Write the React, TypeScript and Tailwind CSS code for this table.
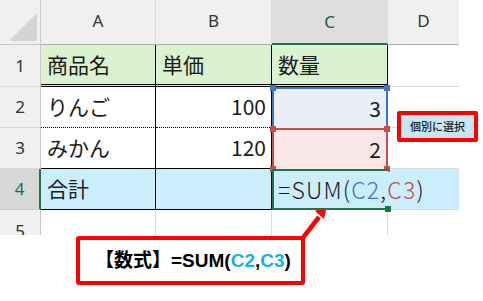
import React from "react";

const jp = "font-['Noto_Sans_CJK_JP','Noto_Sans',sans-serif]";
const ui = "font-['Noto_Sans','Noto_Sans_CJK_JP',sans-serif]";

function Handle({ pos, color }: { pos: string; color: string }) {
  return <span className={`absolute w-[6px] h-[6px] ${pos} ${color}`} />;
}

export default function App() {
  return (
    <div className={`relative w-[483px] h-[301px] overflow-hidden bg-white ${jp}`}>
      {/* sheet */}
      <div className="h-[235px] overflow-hidden">
        {/* column headers */}
        <div className={`flex h-[45px] ${ui} text-[17px] text-[#333]`}>
          <div className="relative w-[41px] bg-[#f0f0f0] border-r border-b border-[#c8c8c8]">
            <svg className="absolute left-0 top-0" width="41" height="45" viewBox="0 0 41 45">
              <polygon points="9,41 37,13 37,41" fill="#d4d4d4" />
            </svg>
          </div>
          <div className="w-[115px] flex items-center justify-center pb-[2px] bg-[#f0f0f0] border-r border-r-[#dadada] border-b border-b-[#ababab]">A</div>
          <div className="w-[116px] flex items-center justify-center pb-[2px] bg-[#f0f0f0] border-r border-r-[#dadada] border-b border-b-[#ababab]">B</div>
          <div className="w-[116px] flex items-center justify-center bg-[#dedede] border-r border-r-[#dadada] border-b-2 border-b-[#217346] text-[#1d5c3c]">C</div>
          <div className="w-[71px] flex items-center justify-center pb-[2px] bg-[#f0f0f0] border-b border-b-[#ababab]">D</div>
        </div>

        {/* row 1 */}
        <div className="flex h-[42px] text-[21px] text-[#1a1a1a]">
          <div className={`w-[41px] flex items-center justify-center bg-[#f0f0f0] border-r border-r-[#c8c8c8] border-b border-b-[#dadada] ${ui} text-[17px] text-[#333]`}>1</div>
          <div className="w-[115px] flex items-center pl-[6px] bg-[#daf2d0] border-r border-b-[3px] border-double border-black">商品名</div>
          <div className="w-[116px] flex items-center pl-[6px] bg-[#daf2d0] border-r border-b-[3px] border-double border-black">単価</div>
          <div className="w-[116px] flex items-center pl-[6px] bg-[#daf2d0] border-r border-b-[3px] border-double border-black">数量</div>
          <div className="w-[71px] border-b border-[#dadada]" />
        </div>

        {/* row 2 */}
        <div className="flex h-[41px] text-[21px] text-[#1a1a1a]">
          <div className={`w-[41px] flex items-center justify-center bg-[#f0f0f0] border-r border-r-[#c8c8c8] border-b border-b-[#dadada] ${ui} text-[17px] text-[#333]`}>2</div>
          <div className="w-[115px] flex items-center pl-[6px] border-r border-r-black border-b border-b-black [border-bottom-style:dotted]">りんご</div>
          <div className="w-[116px] flex items-center justify-end pr-[5px] border-r border-r-black border-b border-b-black [border-bottom-style:dotted]">100</div>
          <div className="relative w-[116px] flex items-center justify-end pr-[5px] bg-[#e9eef8] border-2 border-b-0 border-[#4472c4]">
            3
            <Handle pos="-left-[4px] -top-[4px]" color="bg-[#4472c4]" />
            <Handle pos="-right-[4px] -top-[4px]" color="bg-[#4472c4]" />
          </div>
          <div className="w-[71px] border-b border-[#dadada]" />
        </div>

        {/* row 3 */}
        <div className="flex h-[41px] text-[21px] text-[#1a1a1a]">
          <div className={`w-[41px] flex items-center justify-center bg-[#f0f0f0] border-r border-r-[#c8c8c8] border-b border-b-[#dadada] ${ui} text-[17px] text-[#333]`}>3</div>
          <div className="w-[115px] flex items-center pl-[6px] border-r border-b border-black">みかん</div>
          <div className="w-[116px] flex items-center justify-end pr-[5px] border-r border-b border-black">120</div>
          <div className="relative w-[116px] flex items-center justify-end pr-[5px] bg-[#f9e6e6] border-2 border-b-0 border-[#c0504d]">
            2
            <Handle pos="-left-[4px] -top-[4px]" color="bg-[#c0504d]" />
            <Handle pos="-right-[4px] -top-[4px]" color="bg-[#c0504d]" />
            <Handle pos="-left-[4px] -bottom-[3px]" color="bg-[#c0504d]" />
            <Handle pos="-right-[4px] -bottom-[3px]" color="bg-[#c0504d]" />
          </div>
          <div className="w-[71px] border-b border-[#dadada]" />
        </div>

        {/* row 4 */}
        <div className="flex h-[41px] text-[21px] text-[#1a1a1a]">
          <div className={`w-[41px] flex items-center justify-center bg-[#d8d8d8] border-r-2 border-r-[#217346] border-b border-b-[#c8c8c8] ${ui} text-[17px] text-[#1d6b43]`}>4</div>
          <div className="w-[115px] flex items-center pl-[6px] bg-[#caeefb] border-r border-b border-black">合計</div>
          <div className="w-[116px] bg-[#caeefb] border-r border-b border-black" />
          <div className="relative z-10 w-[116px] flex items-center pl-[4px] whitespace-nowrap bg-[#caeefb] border-2 border-r-0 border-[#217346] text-[23px] tracking-[1.2px]">
            <span className="font-light">=SUM(</span>
            <span className="font-light text-[#4472c4]">C2</span>
            <span className="font-light">,</span>
            <span className="font-light text-[#c0504d]">C3</span>
            <span className="font-light">)</span>
            <span className="absolute -right-[3px] -bottom-[4px] w-[6px] h-[6px] bg-[#217346]" />
          </div>
          <div className="w-[71px] bg-[#caeefb] border-b border-[#dadada]" />
        </div>

        {/* row 5 */}
        <div className="flex h-[41px]">
          <div className={`w-[41px] flex items-center justify-center bg-[#f0f0f0] border-r border-r-[#c8c8c8] ${ui} text-[17px] text-[#333]`}>5</div>
          <div className="w-[115px] border-r border-[#dadada]" />
          <div className="w-[116px] border-r border-[#dadada]" />
          <div className="w-[116px] border-r border-[#dadada]" />
          <div className="w-[71px]" />
        </div>
      </div>

      {/* formula note */}
      <div className="ml-[76px] mt-[1px] w-[229px] h-[49px] flex items-center pl-[15px] border-4 border-[#ff0000] rounded-[3px] bg-white">
        <span className="text-[19px] font-bold text-black whitespace-nowrap font-['Liberation_Sans','Noto_Sans_CJK_JP',sans-serif]">
          <span className={jp}>【数式】</span>=SUM(<span className="text-[#1aaeea]">C2</span>,<span className="text-[#1aaeea]">C3</span>)
        </span>
      </div>

      {/* arrow from note to the formula cell */}
      <svg className="absolute left-0 top-0 pointer-events-none" width="483" height="301" viewBox="0 0 483 301">
        <line x1="302" y1="239" x2="319" y2="217" stroke="#ff0000" strokeWidth="4.5" />
        <polygon points="327,206 315,211 324,219" fill="#ff0000" />
      </svg>

      {/* callout for the separate selection */}
      <div className="absolute left-[397px] top-[111px] w-[81px] h-[31px] flex items-center justify-center border-4 border-[#ff0000] rounded-[2px] bg-[#c6e6f6] text-[11px] font-medium text-[#1a1a1a] whitespace-nowrap">
        個別に選択
      </div>
    </div>
  );
}
